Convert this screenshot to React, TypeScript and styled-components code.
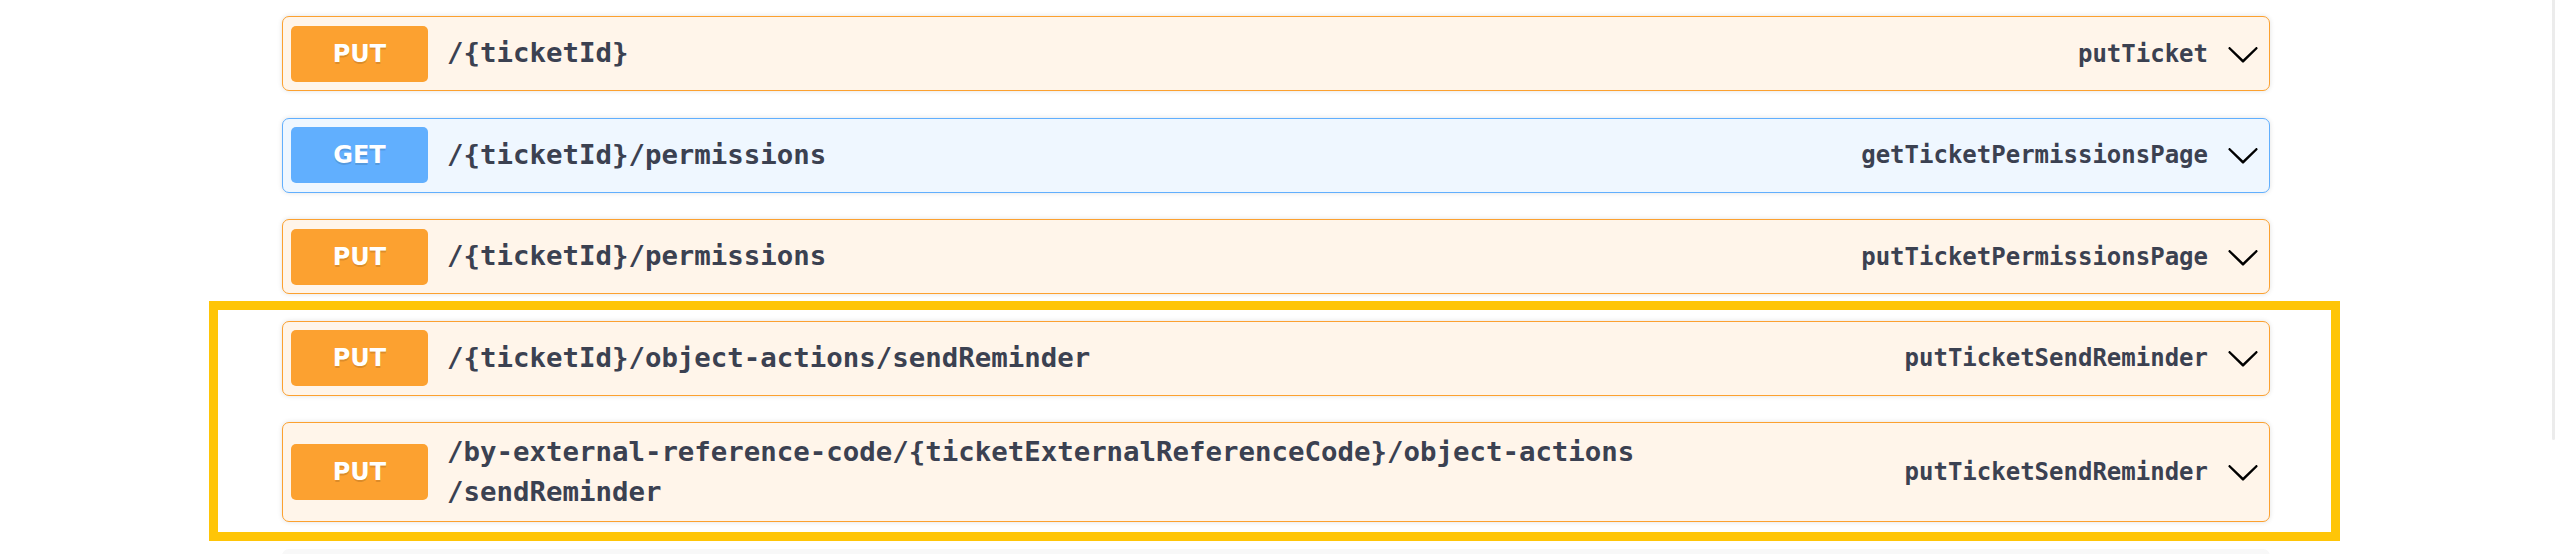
import React from "react";
import styled, { createGlobalStyle } from "styled-components";

const GlobalStyle = createGlobalStyle`
  html, body { margin: 0; padding: 0; background: #ffffff; }
  body { font-family: "DejaVu Sans", "Liberation Sans", sans-serif; }
  #root { width: 100%; }
`;

type Method = "PUT" | "GET";

const palette: Record<Method, { solid: string; tint: string }> = {
  PUT: { solid: "#fca130", tint: "#fff5ea" },
  GET: { solid: "#61affe", tint: "#eff7ff" },
};

const Page = styled.div`
  display: flex;
  width: 2556px;
  height: 554px;
  overflow: hidden;
`;

const Main = styled.main`
  flex: 1;
  padding-top: 16px;
`;

const ScrollTrack = styled.div`
  width: 5px;
  display: flex;
`;

const ScrollThumb = styled.div`
  width: 3.5px;
  height: 440px;
  margin-left: 0.5px;
  background: #ececec;
  border-radius: 0 0 2px 2px;
`;

const List = styled.div`
  width: 1988px;
  margin: 0 auto;
  display: flex;
  flex-direction: column;
  gap: 26.5px;
`;

const Highlight = styled.div`
  position: relative;
  display: flex;
  flex-direction: column;
  gap: 26.5px;
`;

const Frame = styled.span`
  position: absolute;
  top: -19.5px;
  left: -73px;
  right: -70px;
  bottom: -18.5px;
  border: 9.5px solid #ffc507;
  pointer-events: none;
`;

const Block = styled.div<{ $method: Method }>`
  display: flex;
  align-items: center;
  box-sizing: border-box;
  min-height: 75px;
  padding: 8.5px;
  border: 1px solid ${(p) => palette[p.$method].solid};
  background: ${(p) => palette[p.$method].tint};
  border-radius: 7px;
  box-shadow: 0 0 5px rgba(0, 0, 0, 0.12);
`;

const Badge = styled.span<{ $method: Method }>`
  flex: none;
  width: 137px;
  height: 56px;
  display: flex;
  align-items: center;
  justify-content: center;
  border-radius: 5px;
  background: ${(p) => palette[p.$method].solid};
  color: #ffffff;
  font-family: "DejaVu Sans", "Liberation Sans", sans-serif;
  font-weight: 700;
  font-size: 24px;
  text-shadow: 0 1.7px 0 rgba(0, 0, 0, 0.12);
`;

const Path = styled.span`
  flex: 1;
  margin-left: 19px;
  font-family: "DejaVu Sans Mono", "Liberation Mono", monospace;
  font-weight: 700;
  font-size: 27.4px;
  line-height: 40.5px;
  color: #3b4151;
  white-space: nowrap;
`;

const OpId = styled.span`
  flex: none;
  font-family: "DejaVu Sans Mono", "Liberation Mono", monospace;
  font-weight: 700;
  font-size: 24px;
  color: #3b4151;
  margin-right: 18px;
`;

const Arrow = styled.svg`
  flex: none;
  width: 34px;
  height: 34px;
  fill: #000000;
`;

const NextBlock = styled.div`
  height: 40px;
  background: #f8f8f8;
  border-radius: 7px 7px 0 0;
`;

const Chevron = () => (
  <Arrow viewBox="0 0 20 20" aria-hidden="true">
    <path d="M17.418 6.109c.272-.268.709-.268.979 0s.271.701 0 .969l-7.908 7.83c-.27.268-.707.268-.979 0l-7.908-7.83c-.27-.268-.27-.701 0-.969.271-.268.709-.268.979 0L10 13.25l7.418-7.141z" />
  </Arrow>
);

type Op = { method: Method; path: string[]; id: string };

const Operation = ({ op }: { op: Op }) => (
  <Block $method={op.method}>
    <Badge $method={op.method}>{op.method}</Badge>
    <Path>
      {op.path.map((line, i) => (
        <React.Fragment key={i}>
          {i > 0 && <br />}
          {line}
        </React.Fragment>
      ))}
    </Path>
    <OpId>{op.id}</OpId>
    <Chevron />
  </Block>
);

const plain: Op[] = [
  { method: "PUT", path: ["/{ticketId}"], id: "putTicket" },
  { method: "GET", path: ["/{ticketId}/permissions"], id: "getTicketPermissionsPage" },
  { method: "PUT", path: ["/{ticketId}/permissions"], id: "putTicketPermissionsPage" },
];

const highlighted: Op[] = [
  { method: "PUT", path: ["/{ticketId}/object-actions/sendReminder"], id: "putTicketSendReminder" },
  {
    method: "PUT",
    path: ["/by-external-reference-code/{ticketExternalReferenceCode}/object-actions", "/sendReminder"],
    id: "putTicketSendReminder",
  },
];

export default function App() {
  return (
    <>
      <GlobalStyle />
      <Page>
        <Main>
          <List>
            {plain.map((op, i) => (
              <Operation key={i} op={op} />
            ))}
            <Highlight>
              {highlighted.map((op, i) => (
                <Operation key={i} op={op} />
              ))}
              <Frame />
            </Highlight>
            <NextBlock />
          </List>
        </Main>
        <ScrollTrack>
          <ScrollThumb />
        </ScrollTrack>
      </Page>
    </>
  );
}
